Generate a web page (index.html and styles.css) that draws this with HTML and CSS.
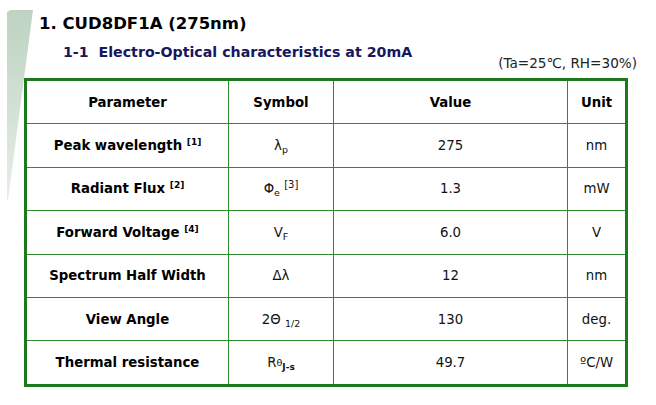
FILE: index.html
```html
<!DOCTYPE html>
<html>
<head>
<meta charset="utf-8">
<link rel="stylesheet" href="styles.css">
</head>
<body>
<div class="page">
  <svg class="wedge" width="30" height="200" viewBox="0 0 30 200">
    <defs>
      <linearGradient id="g" x1="0" y1="0" x2="0" y2="1">
        <stop offset="0" stop-color="#bed3c1"/>
        <stop offset="1" stop-color="#e6eee7"/>
      </linearGradient>
    </defs>
    <polygon points="0,2 4,0 26,0 1,190 0,190" fill="url(#g)"/>
  </svg>
  <h1 class="title">1. CUD8DF1A (275nm)</h1>
  <div class="subrow">
    <h2 class="subtitle">1-1&nbsp; Electro-Optical characteristics at 20mA</h2>
    <div class="cond">(Ta=25℃, RH=30%)</div>
  </div>
  <table class="spec">
    <colgroup>
      <col class="c1"><col class="c2"><col class="c3"><col class="c4">
    </colgroup>
    <thead>
      <tr><th>Parameter</th><th>Symbol</th><th>Value</th><th>Unit</th></tr>
    </thead>
    <tbody>
      <tr><td class="p">Peak wavelength <sup>[1]</sup></td><td>λ<sub>p</sub></td><td>275</td><td>nm</td></tr>
      <tr><td class="p">Radiant Flux <sup>[2]</sup></td><td>Φ<sub>e</sub> <sup class="n">[3]</sup></td><td>1.3</td><td>mW</td></tr>
      <tr><td class="p">Forward Voltage <sup>[4]</sup></td><td>V<sub class="f">F</sub></td><td>6.0</td><td>V</td></tr>
      <tr><td class="p">Spectrum Half Width</td><td>Δλ</td><td>12</td><td>nm</td></tr>
      <tr><td class="p">View Angle</td><td>2Θ <sub>1/2</sub></td><td>130</td><td>deg.</td></tr>
      <tr><td class="p">Thermal resistance</td><td>R<span class="th">θ</span><sub class="js">J-s</sub></td><td>49.7</td><td>ºC/W</td></tr>
    </tbody>
  </table>
</div>
</body>
</html>
```

FILE: styles.css
```css
html, body {
  margin: 0;
  padding: 0;
  background: #ffffff;
}
body {
  font-family: "DejaVu Sans", Verdana, sans-serif;
  color: #111;
}
.page {
  position: relative;
  width: 656px;
  height: 405px;
  padding: 14px 0 0 24px;
  box-sizing: border-box;
}
.wedge {
  position: absolute;
  left: 7px;
  top: 10px;
}
.title {
  margin: 0 0 0 15px;
  font-size: 16.5px;
  font-weight: bold;
  line-height: 20px;
  color: #000;
  position: relative;
}
.subrow {
  display: flex;
  justify-content: space-between;
  align-items: flex-start;
  width: 613px;
  height: 44px;
}
.subtitle {
  margin: 8px 0 0 39px;
  font-size: 14.2px;
  font-weight: bold;
  line-height: 20px;
  color: #17175e;
}
.cond {
  margin-top: 21px;
  font-size: 13.6px;
  line-height: 16px;
  color: #222;
}
.spec {
  border-collapse: collapse;
  border: 3px solid #1c7a1c;
  table-layout: fixed;
  width: 603px;
}
.c1 { width: 203px; }
.c2 { width: 105px; }
.c3 { width: 234px; }
.c4 { width: 59px; }
.spec th, .spec td {
  border: 1.5px solid #2a8c2a;
  text-align: center;
  vertical-align: middle;
  height: 42.4px;
  padding: 0;
  font-size: 13.3px;
  color: #111;
}
.spec th {
  font-weight: bold;
  color: #000;
}
.spec td.p {
  font-weight: bold;
  color: #000;
}
sup {
  font-size: 9px;
  vertical-align: 5px;
  line-height: 0;
}
sup.n {
  font-weight: normal;
  font-size: 10px;
}
sub {
  font-size: 9.5px;
  vertical-align: -3px;
  line-height: 0;
}
sub.js {
  font-weight: bold;
  font-size: 9px;
}
.th {
  font-size: 9.5px;
  vertical-align: 1px;
}
```
